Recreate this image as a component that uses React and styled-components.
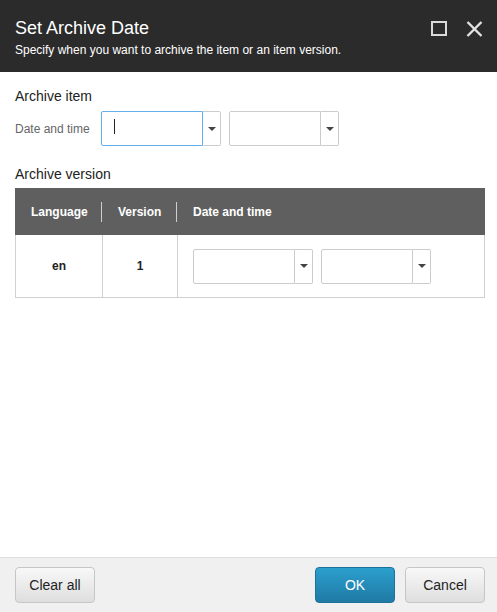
import React from "react";
import styled, { createGlobalStyle } from "styled-components";

const GlobalStyle = createGlobalStyle`
	html, body {
		margin: 0;
		padding: 0;
		background: #fff;
	}
	body {
		font-family: "Liberation Sans", Arial, sans-serif;
		color: #222;
	}
`;

const Dialog = styled.div`
	display: flex;
	flex-direction: column;
	width: 497px;
	height: 612px;
	background: #fff;
`;

const Header = styled.div`
	display: flex;
	justify-content: space-between;
	align-items: flex-start;
	height: 72px;
	box-sizing: border-box;
	padding: 17px 14px 0 15px;
	background: #2b2b2b;
	color: #fff;
`;

const Title = styled.h1`
	margin: 0;
	font-size: 18px;
	line-height: 22px;
	font-weight: normal;
`;

const Subtitle = styled.p`
	margin: 4px 0 0;
	font-size: 12px;
	line-height: 15px;
`;

const HeaderIcons = styled.div`
	display: flex;
	gap: 18px;
	padding-top: 4px;
`;

const IconButton = styled.span`
	display: block;
	width: 17px;
	height: 16px;
	cursor: pointer;
`;

const Body = styled.div`
	flex: 1;
	padding: 16px 12px 0 15px;
`;

const SectionTitle = styled.h2`
	margin: ${(p) => p.$top || 0}px 0 0;
	font-size: 14px;
	line-height: 17px;
	font-weight: normal;
	color: #222;
`;

const FieldRow = styled.div`
	display: flex;
	align-items: center;
	margin-top: 6px;
`;

const Label = styled.span`
	width: 86px;
	font-size: 12px;
	color: #666;
`;

const Pickers = styled.div`
	display: flex;
	gap: 8px;
`;

const Combo = styled.div`
	display: flex;
	height: 35px;
`;

const Field = styled.div`
	position: relative;
	width: ${(p) => p.$width}px;
	box-sizing: border-box;
	border: 1px solid ${(p) => (p.$focused ? "#66afe9" : "#cccccc")};
	border-radius: 2px 0 0 2px;
	background: #fff;
`;

const Caret = styled.span`
	position: absolute;
	left: 12px;
	top: 7px;
	width: 1px;
	height: 15px;
	background: #222;
`;

const DropButton = styled.div`
	display: flex;
	align-items: center;
	justify-content: center;
	width: 18px;
	box-sizing: border-box;
	border: 1px solid #cccccc;
	border-left: none;
	border-radius: 0 2px 2px 0;
	background: #fff;

	&::after {
		content: "";
		border-left: 4px solid transparent;
		border-right: 4px solid transparent;
		border-top: 4px solid #444;
	}
`;

const Table = styled.div`
	margin-top: 5px;
	width: 470px;
	display: grid;
	grid-template-columns: 87px 75px 1fr;
`;

const HeadCell = styled.div`
	position: relative;
	display: flex;
	align-items: center;
	height: 47px;
	padding-left: 16px;
	background: #5f5f5f;
	color: #fff;
	font-size: 12px;
	font-weight: bold;

	${(p) =>
		p.$divider &&
		`&::after {
			content: "";
			position: absolute;
			right: 0;
			top: 14px;
			height: 20px;
			width: 1px;
			background: #cfcfcf;
		}`}
`;

const Cell = styled.div`
	display: flex;
	align-items: center;
	justify-content: ${(p) => (p.$center ? "center" : "flex-start")};
	height: 63px;
	box-sizing: border-box;
	padding: 0 0 0 ${(p) => (p.$center ? 0 : 15)}px;
	border-bottom: 1px solid #d0d0d0;
	border-left: 1px solid #d0d0d0;
	font-size: 12px;
	font-weight: bold;
	color: #222;

	&:last-child {
		border-right: 1px solid #d0d0d0;
	}
`;

const Footer = styled.div`
	display: flex;
	align-items: center;
	gap: 10px;
	height: 55px;
	box-sizing: border-box;
	padding: 0 12px 0 15px;
	border-top: 1px solid #dedede;
	background: #f0f0f0;
`;

const Button = styled.button`
	width: 80px;
	height: 36px;
	margin-left: ${(p) => (p.$pushRight ? "auto" : 0)};
	border-radius: 4px;
	border: 1px solid ${(p) => (p.$primary ? "#1c719a" : "#c6c6c6")};
	background: ${(p) =>
		p.$primary
			? "linear-gradient(#2c9fcd, #1f7aa4)"
			: "linear-gradient(#f8f8f8, #dedede)"};
	color: ${(p) => (p.$primary ? "#fff" : "#222")};
	font-family: "Liberation Sans", Arial, sans-serif;
	font-size: 14px;
	cursor: pointer;
`;

const DatePicker = ({ focused }) => (
	<Pickers>
		<Combo>
			<Field $width={102} $focused={focused}>{focused && <Caret />}</Field>
			<DropButton />
		</Combo>
		<Combo>
			<Field $width={92} />
			<DropButton />
		</Combo>
	</Pickers>
);

const App = () => {
	return (
		<>
			<GlobalStyle />
			<Dialog>
				<Header>
					<div>
						<Title>Set Archive Date</Title>
						<Subtitle>Specify when you want to archive the item or an item version.</Subtitle>
					</div>
					<HeaderIcons>
						<IconButton>
							<svg width="17" height="16" viewBox="0 0 17 16">
								<rect x="1" y="1" width="14" height="13" fill="none" stroke="#dadada" strokeWidth="2" />
							</svg>
						</IconButton>
						<IconButton>
							<svg width="17" height="16" viewBox="0 0 17 16">
								<path d="M1.5 1 L15.5 15 M15.5 1 L1.5 15" stroke="#e2e2e2" strokeWidth="2.4" />
							</svg>
						</IconButton>
					</HeaderIcons>
				</Header>

				<Body>
					<SectionTitle>Archive item</SectionTitle>
					<FieldRow>
						<Label>Date and time</Label>
						<DatePicker focused />
					</FieldRow>

					<SectionTitle $top={20}>Archive version</SectionTitle>
					<Table>
						<HeadCell $divider>Language</HeadCell>
						<HeadCell $divider>Version</HeadCell>
						<HeadCell>Date and time</HeadCell>
						<Cell $center>en</Cell>
						<Cell $center>1</Cell>
						<Cell>
							<DatePicker />
						</Cell>
					</Table>
				</Body>

				<Footer>
					<Button>Clear all</Button>
					<Button $primary $pushRight>OK</Button>
					<Button>Cancel</Button>
				</Footer>
			</Dialog>
		</>
	);
};

export default App;
